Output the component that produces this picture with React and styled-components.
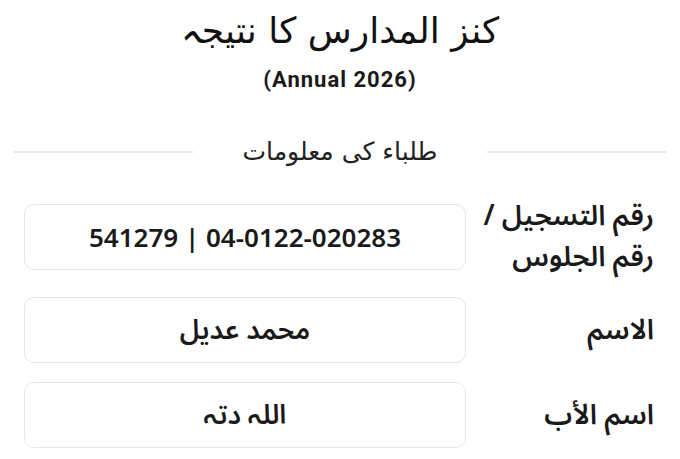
import React from 'react';
import styled, { createGlobalStyle } from 'styled-components';

const GlobalStyle = createGlobalStyle`
  body {
    margin: 0;
    background: #ffffff;
    font-family: "Noto Sans Arabic", "DejaVu Sans", "Noto Sans", sans-serif;
    color: #111111;
  }
`;

const Page = styled.div`
  width: 680px;
  padding-top: 6px;
`;

const Header = styled.header`
  display: flex;
  flex-direction: column;
  align-items: center;
`;

const Title = styled.h1`
  margin: 0;
  font-family: "DejaVu Sans", sans-serif;
  font-size: 36px;
  font-weight: 400;
  line-height: 50px;
  direction: rtl;
`;

const Subtitle = styled.div`
  margin-top: 12px;
  font-family: "Roboto", "Inter", sans-serif;
  font-size: 22px;
  line-height: 24px;
  font-weight: 700;
  letter-spacing: 1px;
  color: #1a1a1a;
`;

const Divider = styled.div`
  display: flex;
  align-items: center;
  padding: 0 14px;
  margin-top: 45px;
  gap: 50px;
  direction: rtl;

  &::before,
  &::after {
    content: '';
    flex: 1;
    height: 2px;
    background: #e8e8e8;
  }
`;

const DividerText = styled.span`
  font-family: "DejaVu Sans", sans-serif;
  font-size: 25px;
  line-height: 30px;
  color: #222222;
`;

const Fields = styled.div`
  display: flex;
  flex-direction: column;
  gap: 19px;
  margin-top: 29px;
  padding: 0 26px 0 24px;
  direction: rtl;
`;

const Row = styled.div`
  display: grid;
  grid-template-columns: 1fr 442px;
  align-items: center;
`;

const Label = styled.div`
  font-size: 28px;
  line-height: 41px;
  font-weight: 600;
  color: #1a1a1a;
`;

const ValueBox = styled.div`
  height: 66px;
  box-sizing: border-box;
  border: 1px solid #e6e6e6;
  border-radius: 10px;
  display: flex;
  align-items: center;
  justify-content: center;
  font-size: ${p => (p.ltr ? '26px' : '27px')};
  font-family: ${p => (p.ltr ? '"Noto Sans", sans-serif' : 'inherit')};
  font-weight: 600;
  color: #1a1a1a;
  direction: ${p => (p.ltr ? 'ltr' : 'rtl')};
`;

const fields = [
  { label: ['رقم التسجیل /', 'رقم الجلوس'], value: '541279 | 04-0122-020283', ltr: true },
  { label: ['الاسم'], value: 'محمد عدیل' },
  { label: ['اسم الأب'], value: 'اللہ دتہ' },
];

export default function App() {
  return (
    <Page>
      <GlobalStyle />
      <Header>
        <Title>کنز المدارس کا نتیجہ</Title>
        <Subtitle>(Annual 2026)</Subtitle>
      </Header>
      <Divider>
        <DividerText>طلباء کی معلومات</DividerText>
      </Divider>
      <Fields>
        {fields.map((f, i) => (
          <Row key={i}>
            <Label>
              {f.label.map((l, j) => (
                <div key={j}>{l}</div>
              ))}
            </Label>
            <ValueBox ltr={f.ltr}>{f.value}</ValueBox>
          </Row>
        ))}
      </Fields>
    </Page>
  );
}
